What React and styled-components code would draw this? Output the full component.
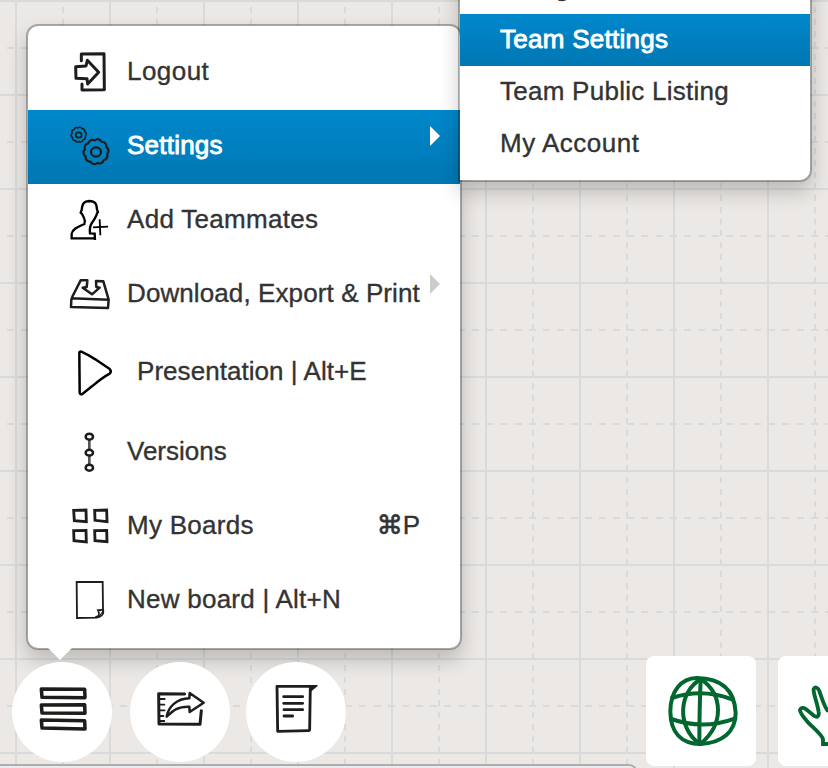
import React from "react";
import styled, { createGlobalStyle, css } from "styled-components";

const GlobalStyle = createGlobalStyle`
  body {
    margin: 0;
    overflow: hidden;
    font-family: "Liberation Sans", Arial, sans-serif;
  }
  * {
    box-sizing: border-box;
  }
`;

const gridLine = "#dbdadb";

const Board = styled.main`
  position: relative;
  display: flex;
  flex-direction: column;
  justify-content: flex-end;
  width: 828px;
  height: 768px;
  overflow: hidden;
  isolation: isolate;
  background-color: #ebe8e5;
  background-image: linear-gradient(90deg, ${gridLine} 2px, transparent 2px),
    linear-gradient(180deg, ${gridLine} 2px, transparent 2px);
  background-size: 94px 94px;
  background-position: 15px 0, 0 0;

  &::before,
  &::after {
    content: "";
    position: absolute;
    inset: 0;
    z-index: -1;
  }
  &::before {
    background: repeating-linear-gradient(180deg, ${gridLine} 0 6px, transparent 6px 11.75px) 0 7px / 100% 94px;
    mask: linear-gradient(90deg, #000 2px, transparent 2px) 62px 0 / 94px 94px;
  }
  &::after {
    background: repeating-linear-gradient(90deg, ${gridLine} 0 7px, transparent 7px 14.1px) 7px 0 / 141px 100%;
    mask: linear-gradient(180deg, #000 2px, transparent 2px) 0 47px / 94px 94px;
  }
`;

const popup = css`
  position: absolute;
  border: 2px solid rgba(0, 0, 0, 0.28);
  background: #fff;
  background-clip: padding-box;
  box-shadow: 0 10px 20px rgba(0, 0, 0, 0.2);
  color: #333;
  font-size: 26px;
  line-height: 30px;
  white-space: nowrap;
  -webkit-text-stroke: 0.35px currentColor;
`;

const Menu = styled.nav`
  ${popup}
  left: 26px;
  top: 24px;
  width: 436px;
  padding: 10px 0;
  border-radius: 12px;

  &::after {
    content: "";
    position: absolute;
    left: 20px;
    top: 100%;
    border: 12px solid transparent;
    border-top-color: #fff;
    border-bottom: 0;
  }
`;

const Submenu = styled.nav`
  ${popup}
  left: 458px;
  top: -50px;
  width: 354px;
  padding: 10px 0;
  border-radius: 0 0 12px 0;
`;

const active = css`
  color: #fff;
  background: linear-gradient(#0088cc, #0077b3);
  -webkit-text-stroke: 0.9px #fff;
`;

const MenuRow = styled.div`
  position: relative;
  display: flex;
  align-items: center;
  height: ${(p) => (p.$tall ? 84 : 74)}px;
  padding: 0 40px 0 38px;
  ${(p) => p.$active && active}
`;

const RowIcon = styled.svg`
  flex: none;
  width: 52px;
  height: 52px;
  fill: none;
  stroke: #1d1d1b;
  stroke-width: 9;
  stroke-linecap: round;
  stroke-linejoin: round;
`;

const RowLabel = styled.span`
  padding-bottom: ${(p) => (p.$tall ? 7 : 4)}px;
  margin-left: ${(p) => (p.$tall ? 19 : 9)}px;
  letter-spacing: ${(p) => p.$spacing || 0}px;
`;

const Shortcut = styled.span`
  display: flex;
  align-items: center;
  margin-left: auto;
  padding-bottom: 4px;
`;

const CommandKey = styled.span`
  font-family: "DejaVu Sans", sans-serif;
  font-size: 26px;
  -webkit-text-stroke: 0.7px currentColor;
`;

const Arrow = styled.i`
  position: absolute;
  right: 20px;
  top: 16px;
  border: 10px solid transparent;
  border-left-color: ${(p) => (p.$active ? "#fff" : "#ccc")};
  border-right: 0;
`;

const SubmenuRow = styled.div`
  height: 52px;
  padding: 10px 40px 12px;
  letter-spacing: ${(p) => p.$spacing || 0}px;
  ${(p) => p.$active && active}
`;

const Dock = styled.footer`
  position: relative;
  z-index: 1;
  display: flex;
  align-items: flex-start;
  height: 112px;
  padding-left: 12px;
`;

const RoundButton = styled.button`
  flex: none;
  width: 100px;
  height: 100px;
  margin: 6px ${(p) => p.$gap}px 0 0;
  padding: 0;
  border: 0;
  border-radius: 50%;
  background: #fff;
`;

const TileButton = styled.button`
  flex: none;
  width: 110px;
  height: 110px;
  margin-right: 22px;
  padding: 0;
  border: 0;
  border-radius: 8px;
  background: #fff;
`;

const ButtonDrawing = styled.svg`
  display: block;
  width: 100%;
  height: 100%;
  fill: none;
  stroke: ${(p) => p.$color || "#1d1d1b"};
  stroke-width: ${(p) => p.$weight || 9};
  stroke-linecap: round;
  stroke-linejoin: round;
`;

const BottomPanel = styled.div`
  position: absolute;
  left: -10px;
  top: 764px;
  width: 648px;
  height: 30px;
  border: 2px solid #adadad;
  border-radius: 9px;
  background: #e9ebee;
`;

// Closed outline made of n outward lobes around a circle.
const scallop = (cx, cy, r, n, bulge) => {
  const points = Array.from({ length: n }, (_, i) => {
    const a = (i / n) * Math.PI * 2 + 0.2;
    return [cx + r * Math.cos(a), cy + r * Math.sin(a)].map((v) => v.toFixed(1)).join(" ");
  });
  return (
    `M${points[0]}` +
    points.slice(1).concat(points[0]).map((p) => `A${bulge} ${bulge} 0 0 1 ${p}`).join("") +
    "Z"
  );
};

const LogoutIcon = () => (
  <RowIcon viewBox="138 81 156 156">
    <path d="M184 122V102L252 101L253 209L186 210V192" />
    <path d="M167 140L198 138L202 121L236 157L203 192L201 176L168 175Z" />
  </RowIcon>
);

const GearsIcon = () => (
  <RowIcon viewBox="138 303 156 156">
    <g strokeWidth="5">
      <path d={scallop(176, 344, 20.5, 10, 8)} />
      <ellipse cx="176" cy="345" rx="9" ry="8" />
    </g>
    <g strokeWidth="6.5">
      <path d={scallop(228, 395, 34, 10, 13)} />
      <ellipse cx="228" cy="396" rx="15" ry="14" />
    </g>
  </RowIcon>
);

const TeammateIcon = () => (
  <RowIcon viewBox="138 30 156 156">
    <g stroke="#000" strokeWidth="7" strokeLinecap="butt" strokeLinejoin="miter">
      <path d="M225 165L224 146L210 145C208 129 210 121 217 112C224 102 229 95 231 85L234 81L231 74C230 55 225 49 208 48C192 49 187 54 185 75L182 83L186 87C192 97 196 111 193 117C178 124 157 131 155 146L155 160L224 160" />
      <path d="M219 127L264 125M239 103L241 151" strokeWidth="5.5" />
    </g>
  </RowIcon>
);

const DownloadIcon = () => (
  <RowIcon viewBox="138 252 156 156">
    <g strokeWidth="7.5" strokeLinecap="butt">
      <path d="M202 289L202 286L182 286L158 333L154 344L153 366L264 369L266 344L250 289L228 288L229 306L239 308L216 328L188 308L200 306L202 289M154 340L266 344" />
    </g>
  </RowIcon>
);

const PlayIcon = () => (
  <RowIcon viewBox="138 489 156 156">
    <path
      d="M178 503Q178 499 184 500Q202 508 226 523L268 551Q276 559 269 566Q247 578 216 604L187 627Q180 630 179 623Z"
      stroke="#000"
      strokeWidth="7.5"
    />
  </RowIcon>
);

const VersionsIcon = () => (
  <RowIcon viewBox="138 36 156 156">
    <path d="M208 76V103M208 124V148" stroke="#555" strokeWidth="8" />
    <g strokeWidth="7.5">
      <ellipse cx="208" cy="65" rx="11" ry="9" />
      <ellipse cx="208" cy="113" rx="11" ry="8.5" />
      <ellipse cx="208" cy="158" rx="11" ry="9" />
    </g>
  </RowIcon>
);

const BoardsIcon = () => (
  <RowIcon viewBox="138 258 156 156">
    <g strokeWidth="8.5" strokeLinejoin="miter">
      <path d="M161 286L198 285L199 320L163 317Z" />
      <path d="M224 286L260 285L261 320L225 316Z" />
      <path d="M161 347L198 346L199 381L162 377Z" />
      <path d="M224 347L260 346L261 380L225 377Z" />
    </g>
  </RowIcon>
);

const PageIcon = () => (
  <RowIcon viewBox="138 480 156 156">
    <g strokeWidth="5.5" strokeLinejoin="miter" strokeLinecap="butt">
      <path d="M170 501L248 501L249 583C253 599 243 606 230 608L171 609Z" />
      <path d="M250 584L234 586Q238 592 237 602L226 607" />
      <path d="M250 586L238 604" strokeWidth="3" />
    </g>
  </RowIcon>
);

const MenuBarsDrawing = () => (
  <ButtonDrawing viewBox="36 66 300 300" $weight={10.5}>
    <path d="M124 147L254 148L255 173L126 172Z" />
    <path d="M124 195L254 194L255 220L126 219Z" />
    <path d="M124 240L254 242L255 267L126 264Z" />
  </ButtonDrawing>
);

const ShareDrawing = () => (
  <ButtonDrawing viewBox="390 66 300 300" $weight={9}>
    <path d="M554 162L476 161L477 252L600 253L604 212" />
    <path d="M500 230C505 200 530 176 568 175L569 159L611 188L569 216L568 200C533 199 521 210 500 230Z" strokeWidth="7.5" />
    <path d="M481 177H494M481 194H493M481 211H494M481 228H490M481 243H493" strokeWidth="5.5" />
  </ButtonDrawing>
);

const NotesDrawing = () => (
  <ButtonDrawing viewBox="738 66 300 300" $weight={8.5}>
    <path d="M931 139L831 139L833 274L925 272Q930 272 929 264Z" />
    <path d="M930 137H951L932 153Z" fill="#1d1d1b" strokeWidth="4" />
    <path d="M851 170H908M851 190H908M852 209H908M852 228H878" />
  </ButtonDrawing>
);

const GlobeDrawing = () => (
  <ButtonDrawing viewBox="138 48 330 330" $color="#00672f" $weight={12}>
    <path d="M290 114C245 115 211 151 211 215C212 278 244 311 301 312C366 309 407 276 407 219C404 151 367 115 290 114Z" />
    <path d="M302 118Q298 210 298 312" />
    <path d="M302 118C235 156 230 261 298 311M304 118C369 164 373 252 302 311" />
    <path d="M216 174Q305 144 396 178M214 237Q309 271 406 235" />
  </ButtonDrawing>
);

const HandDrawing = () => (
  <ButtonDrawing viewBox="534 48 330 330" $color="#00672f" $weight={11.5}>
    <path
      d="M669 318V298C666 284 640 264 624 247C612 233 598 218 600 209C604 200 614 204 621 210L643 228C652 234 658 227 656 216C652 188 639 160 641 147C645 139 655 143 658 153C664 170 674 205 685 214"
      strokeLinecap="butt"
    />
    <path d="M669 312H760V250" strokeLinecap="butt" />
  </ButtonDrawing>
);

const menuItems = [
  { label: "Logout", Icon: LogoutIcon, spacing: 0.45 },
  { label: "Settings", Icon: GearsIcon, active: true, arrow: true, spacing: 0.22 },
  { label: "Add Teammates", Icon: TeammateIcon, spacing: 0.3 },
  { label: "Download, Export & Print", Icon: DownloadIcon, arrow: true, spacing: 0.1 },
  { label: "Presentation | Alt+E", Icon: PlayIcon, tall: true, spacing: 0.05 },
  { label: "Versions", Icon: VersionsIcon },
  { label: "My Boards", Icon: BoardsIcon, shortcut: "P", spacing: 0.28 },
  { label: "New board | Alt+N", Icon: PageIcon, spacing: 0.25 },
];

const submenuItems = [
  { label: "Billing" },
  { label: "Team Settings", active: true, spacing: 0.27 },
  { label: "Team Public Listing", spacing: 0.26 },
  { label: "My Account", spacing: 0.5 },
];

export default function App() {
  return (
    <>
      <GlobalStyle />
      <Board>
        <BottomPanel />
        <Menu>
          {menuItems.map(({ label, Icon, active: on, arrow, tall, shortcut, spacing }) => (
            <MenuRow key={label} $active={on} $tall={tall}>
              <Icon />
              <RowLabel $tall={tall} $spacing={spacing}>{label}</RowLabel>
              {shortcut && (
                <Shortcut>
                  <CommandKey>⌘</CommandKey>
                  {shortcut}
                </Shortcut>
              )}
              {arrow && <Arrow $active={on} />}
            </MenuRow>
          ))}
        </Menu>
        <Submenu>
          {submenuItems.map(({ label, active: on, spacing }) => (
            <SubmenuRow key={label} $active={on} $spacing={spacing}>
              {label}
            </SubmenuRow>
          ))}
        </Submenu>
        <Dock>
          <RoundButton $gap={18}><MenuBarsDrawing /></RoundButton>
          <RoundButton $gap={16}><ShareDrawing /></RoundButton>
          <RoundButton $gap={300}><NotesDrawing /></RoundButton>
          <TileButton><GlobeDrawing /></TileButton>
          <TileButton><HandDrawing /></TileButton>
        </Dock>
      </Board>
    </>
  );
}
